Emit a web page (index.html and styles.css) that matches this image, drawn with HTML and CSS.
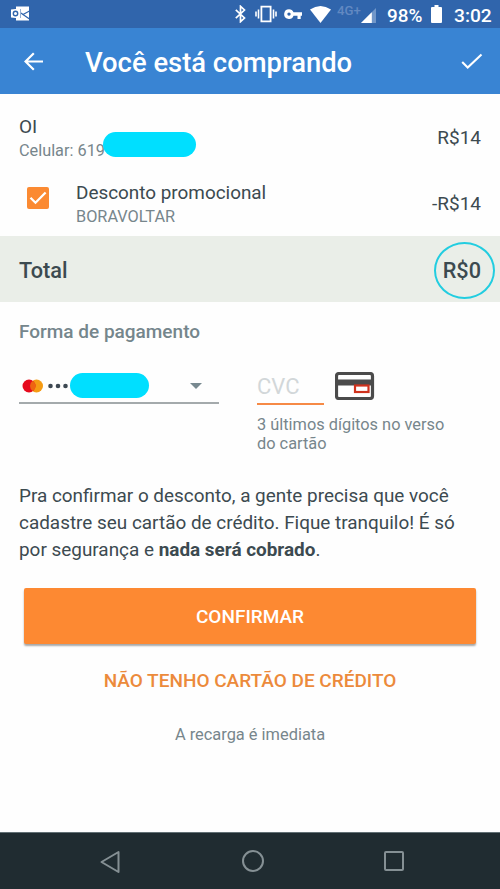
FILE: index.html
```html
<!DOCTYPE html>
<html lang="pt-BR">
<head>
<meta charset="utf-8">
<title>Você está comprando</title>
<link rel="stylesheet" href="styles.css">
</head>
<body>
<div class="screen">
  <div class="status">
    <svg class="mail" width="20" height="16" viewBox="0 0 20 16"><path fill="#fff" d="M5 .5h13v14H5V12h5V3H5z"/><path fill="none" stroke="#3065ac" stroke-width="1.200" d="M18.500 5L12 8.500l6.500 4.500M10 7l2 1.500"/><path fill="#fff" d="M0 3.500l9.500-1v10L0 11.500z"/><circle cx="4.500" cy="7.500" r="2.200" fill="none" stroke="#3065ac" stroke-width="1.400"/></svg>
    <svg class="bluetooth" width="11" height="18" viewBox="0 0 11 18"><path fill="none" stroke="#fff" stroke-width="1.700" d="M.8 4.800l8.700 8.200-4 3.700V1.300l4 3.700-8.700 8.200"/></svg>
    <svg class="vibrate" width="22" height="18" viewBox="0 0 22 18"><path fill="none" stroke="#fff" stroke-width="1.800" d="M6.400 1.700h9.200v14.600H6.400z"/><path fill="none" stroke="#fff" stroke-width="1.600" d="M3.500 4.500v9M1 6.500v5M18.500 4.500v9M21 6.500v5"/></svg>
    <svg class="key" width="19" height="12" viewBox="0 0 19 12"><path fill="#fff" fill-rule="evenodd" d="M5 1.300a4.800 4.800 0 0 1 4.500 3H18v3.400h-1.300v3.200h-3.200V7.700h-4A4.800 4.800 0 1 1 5 1.300zm0 3.100a1.700 1.700 0 1 0 0 3.400 1.700 1.700 0 0 0 0-3.400z"/></svg>
    <svg class="wifi" width="21" height="17" viewBox="0 0 21 17"><path fill="#fff" d="M0 3.500Q10.500-3.500 21 3.500L10.500 17z"/></svg>
    <span class="network">4G+</span>
    <svg class="signal" width="15" height="15" viewBox="0 0 16 16"><path fill="#7197c9" d="M16 0v16H0z"/><path fill="#fff" d="M11.500 4.500V16H0z"/></svg>
    <span class="percent">98%</span>
    <svg class="battery" width="11" height="18" viewBox="0 0 11 18"><path fill="#fff" d="M3.500 0h4v2H10q1 0 1 1v14q0 1-1 1H1q-1 0-1-1V3q0-1 1-1h2.500z"/></svg>
    <span class="clock">3:02</span>
  </div>
  <header class="appbar">
    <svg class="back" width="20" height="19" viewBox="0 0 20 19"><path fill="none" stroke="#fff" stroke-width="2.200" d="M19 9.500H1.500M9.800 1.200L1.500 9.500l8.300 8.300"/></svg>
    <h1>Você está comprando</h1>
    <svg class="done" width="22" height="17" viewBox="0 0 22 17"><path fill="none" stroke="#fff" stroke-width="2.100" d="M1.200 9l5.500 5.500L20.500 1.400"/></svg>
  </header>
  <div class="item">
    <div class="item-text"><div class="name">OI</div><div class="sub">Celular: 619<span class="redact phone-redact"></span></div></div>
    <div class="price">R$14</div>
  </div>
  <div class="item promo">
    <svg class="checkbox" width="22" height="22" viewBox="0 0 22 22"><rect width="22" height="22" rx="2" fill="#fb8a32"/><path fill="none" stroke="#fff" stroke-width="2.300" d="M3.500 10.700l5 5L18.600 5.500"/></svg>
    <div class="item-text"><div class="name promo-name">Desconto promocional</div><div class="sub">BORAVOLTAR</div></div>
    <div class="price">-R$14</div>
  </div>
  <div class="total"><span>Total</span><span class="sum">R$0<i class="ring"></i></span></div>
  <h2>Forma de pagamento</h2>
  <div class="payment">
    <div class="select">
      <svg width="22" height="14" viewBox="0 0 22 14"><circle cx="14.500" cy="7" r="6.500" fill="#f59b13"/><circle cx="7" cy="7" r="6.500" fill="#e60a1d"/><path fill="#ee6511" d="M10.750 1.700a6.500 6.500 0 0 1 0 10.600 6.500 6.500 0 0 1 0-10.600z"/></svg>
      <svg class="dots" width="20" height="6" viewBox="0 0 20 6"><g fill="#3d4852"><circle cx="2.500" cy="3" r="2.300"/><circle cx="10" cy="3" r="2.300"/><circle cx="17.500" cy="3" r="2.300"/></g></svg>
      <span class="redact card-redact"></span>
      <svg class="caret" width="12" height="6" viewBox="0 0 12 6"><path fill="#788990" d="M0 0h12L6 6z"/></svg>
    </div>
    <div class="security">
      <div class="cvc-row"><div class="cvc">CVC</div>
      <svg class="card" width="40" height="28" viewBox="0 0 40 28"><rect x="1.500" y="1.500" width="36" height="25" rx="2.500" fill="#fff" stroke="#4b4b4b" stroke-width="3.200"/><path fill="#4b4b4b" d="M1 7.500h37v6H1z"/><rect x="20" y="13.500" width="13.500" height="6.500" fill="#fff" stroke="#cf321d" stroke-width="2.200"/></svg></div>
      <p>3 últimos dígitos no verso<br>do cartão</p>
    </div>
  </div>
  <p class="message">Pra confirmar o desconto, a gente precisa que você<br>cadastre seu cartão de crédito. Fique tranquilo! É só<br>por segurança e <b>nada será cobrado</b>.</p>
  <div class="confirm"><span>CONFIRMAR</span></div>
  <div class="alternative"><span>NÃO TENHO CARTÃO DE CRÉDITO</span></div>
  <div class="note"><span>A recarga é imediata</span></div>
  <nav>
    <svg class="nav-back" width="20" height="24" viewBox="0 0 20 24"><path fill="none" stroke="#859094" stroke-width="2" stroke-linejoin="round" d="M18.500 2v20L1.500 12z"/></svg>
    <svg class="nav-home" width="24" height="24" viewBox="0 0 24 24"><circle cx="12" cy="12" r="10" fill="none" stroke="#859094" stroke-width="2"/></svg>
    <svg class="nav-recent" width="20" height="20" viewBox="0 0 20 20"><rect x="1" y="1" width="18" height="18" rx="1" fill="none" stroke="#859094" stroke-width="2"/></svg>
  </nav>
</div>
</body>
</html>
```
FILE: styles.css
```css
* { box-sizing: border-box; }
body { margin: 0; font-family: Roboto, sans-serif; color: #3c4a50; }
svg { display: block; flex: none; }
h1, h2, p { margin: 0; }
.screen { width: 500px; height: 889px; background: #fefefe; display: flex; flex-direction: column; overflow: hidden; white-space: nowrap; }
.screen > * { flex: none; }
.status { height: 28px; background: #3065ac; display: flex; align-items: center; color: #fff; }
.mail { margin-left: 11px; margin-top: -1px; }
.bluetooth { margin-left: 204px; }
.vibrate { margin-left: 9px; }
.key { margin-left: 7px; }
.wifi { margin-left: 7px; }
.network { width: 26px; margin-left: 6px; margin-top: -8px; font-size: 13.2px; font-weight: 500; color: #6289c2; }
.signal { margin-left: -2px; margin-top: 2px; }
.percent { width: 36px; margin-left: 11px; margin-top: 2px; font-size: 18.9px; font-weight: 500; }
.battery { margin-left: 8px; }
.clock { margin-left: 12px; margin-top: 2px; font-size: 19.2px; font-weight: 500; }
.appbar { height: 66px; background: #3984d3; display: flex; align-items: center; color: #fff; }
.back { margin-left: 24px; }
h1 { width: 268px; margin-left: 41px; margin-top: 3px; font-size: 27.4px; font-weight: 500; }
.done { margin-left: 108px; }
.item { height: 75px; padding: 20px 19px 0; display: flex; }
.item-text { flex: 1; }
.name { font-size: 19px; line-height: 25px; }
.promo-name { font-size: 18.9px; }
.sub { position: relative; font-size: 16.3px; line-height: 24px; color: #77868c; }
.price { font-size: 19px; line-height: 24px; padding-top: 12px; }
.redact { background: #00dfff; border-radius: 13px; }
.phone-redact { position: absolute; left: 84px; top: -7px; width: 93px; height: 25px; }
.promo { height: 67px; padding-top: 11px; padding-left: 27px; }
.checkbox { margin: 7px 27px 0 0; }
.total { height: 66px; padding: 2px 19px 0; background: #eaeee8; display: flex; align-items: center; justify-content: space-between; font-size: 21.7px; font-weight: 500; }
.sum { position: relative; }
.ring { position: absolute; width: 61px; height: 57px; left: -9px; top: -16px; border: 2px solid #22cde0; border-radius: 50%; }
h2 { margin: 18px 0 0 19px; font-size: 19px; line-height: 24px; font-weight: 500; color: #75868c; }
.payment { display: flex; margin: 24px 19px 0; height: 103px; }
.select { width: 200px; height: 36px; padding: 1px 17px 0 3px; border-bottom: 2px solid #a4aaac; display: flex; align-items: center; }
.dots { margin-left: 4px; }
.card-redact { width: 79px; height: 25px; margin-left: 2px; }
.caret { margin-left: auto; margin-top: 1px; }
.security { margin-left: 38px; }
.cvc-row { display: flex; height: 37px; }
.cvc { width: 67px; height: 37px; padding-top: 6px; border-bottom: 2px solid #f68a46; color: #d2d7d9; font-size: 22px; line-height: 26px; }
.card { margin: 4px 0 0 11px; }
.security p { margin-top: 10px; font-size: 16.35px; line-height: 19px; color: #77868c; }
.message { margin: 11px 19px 0; font-size: 18.92px; line-height: 27px; }
b { font-weight: 700; }
.confirm { height: 56px; margin: 25px 24px 0; background: #fd8932; border-radius: 2px; box-shadow: 0 2px 2px #a7a7a7; color: #fff; display: flex; align-items: center; justify-content: center; font-size: 19px; font-weight: 500; }
.alternative { height: 24px; margin-top: 25px; text-align: center; color: #ec8a3b; font-size: 19px; line-height: 24px; font-weight: 500; }
.note { margin-top: 32px; text-align: center; color: #77868c; font-size: 16.4px; line-height: 20px; }
nav { height: 57px; margin-top: auto; background: #202c31; border-top: 1px solid #627075; display: flex; align-items: center; }
.nav-back { margin-left: 100px; margin-top: 2px; }
.nav-home { margin-left: 120.5px; }
.nav-recent { margin-left: 119.5px; }
```
